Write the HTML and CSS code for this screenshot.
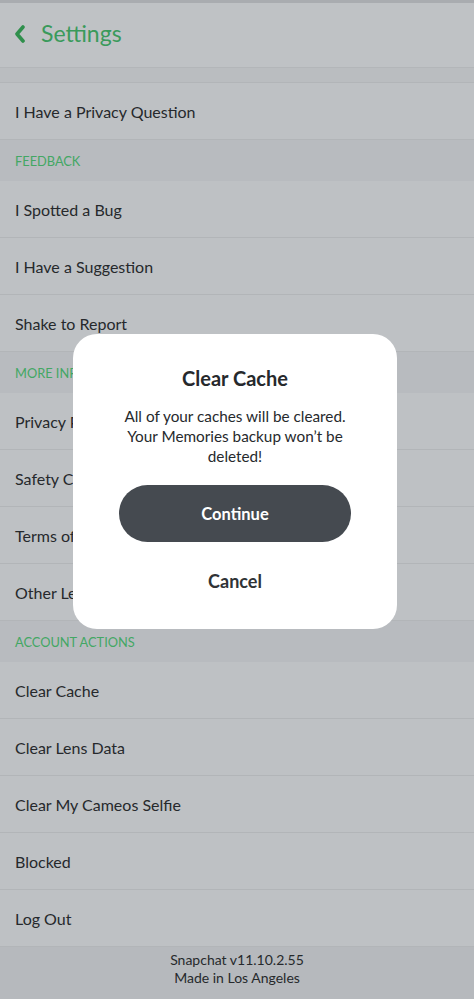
FILE: index.html
```html
<!DOCTYPE html>
<html lang="en">
<head>
    <meta charset="UTF-8">
    <meta name="viewport" content="width=device-width, initial-scale=1.0">
    <title>Settings</title>
    <link rel="stylesheet" href="styles.css">
</head>
<body>
    <div class="screen">
        <div class="header">
            <svg class="back" width="14" height="18" viewBox="0 0 14 18">
                <path d="M10 2 L4 9 L10 16" fill="none" stroke="#2f8f4c" stroke-width="3.6" stroke-linecap="round" stroke-linejoin="round"/>
            </svg>
            <span class="title">Settings</span>
        </div>
        <div class="spacer"></div>

        <div class="row">I Have a Privacy Question</div>
        <div class="section">FEEDBACK</div>
        <div class="row">I Spotted a Bug</div>
        <div class="row">I Have a Suggestion</div>
        <div class="row">Shake to Report</div>
        <div class="section">MORE INFORMATION</div>
        <div class="row">Privacy Policy</div>
        <div class="row">Safety Center</div>
        <div class="row">Terms of Service</div>
        <div class="row">Other Legal</div>
        <div class="section">ACCOUNT ACTIONS</div>
        <div class="row">Clear Cache</div>
        <div class="row">Clear Lens Data</div>
        <div class="row">Clear My Cameos Selfie</div>
        <div class="row">Blocked</div>
        <div class="row">Log Out</div>

        <div class="footer">
            <div>Snapchat v11.10.2.55</div>
            <div>Made in Los Angeles</div>
        </div>

        <div class="dialog">
            <h2>Clear Cache</h2>
            <p>All of your caches will be cleared. Your Memories backup won’t be deleted!</p>
            <button class="btn-continue">Continue</button>
            <button class="btn-cancel">Cancel</button>
        </div>
    </div>
</body>
</html>
```

FILE: styles.css
```css
body {
    margin: 0;
    font-family: 'Lato', 'Noto Sans', sans-serif;
    background-color: #b9bcc0;
    color: #26292c;
}
.screen {
    position: relative;
    width: 474px;
    height: 999px;
    overflow: hidden;
    background-color: #b9bcc0;
}
.header {
    height: 64px;
    border-top: 3px solid #a9acb0;
    display: flex;
    align-items: center;
    padding-left: 13px;
    background-color: #bfc2c5;
    border-bottom: 1px solid #b3b6b9;
}
.back {
    margin-right: 14px;
    margin-top: -3px;
}
.title {
    font-size: 23px;
    color: #3a9a5b;
    margin-top: -4px;
}
.spacer {
    height: 14px;
    background-color: #babdc0;
    border-bottom: 1px solid #b2b5b8;
}
.row {
    height: 56px;
    display: flex;
    align-items: center;
    padding-left: 15px;
    font-size: 16px;
    background-color: #bec1c4;
    border-bottom: 1px solid #b2b5b8;
}
.section {
    height: 41px;
    display: flex;
    align-items: center;
    padding-left: 15px;
    font-size: 12.8px;
    color: #43a764;
    background-color: #b8bbbf;
}
.footer {
    padding-top: 4px;
    text-align: center;
    font-size: 14px;
    line-height: 18px;
    background-color: #b6b9bd;
    height: 60px;
}
.dialog {
    position: absolute;
    left: 73px;
    top: 334px;
    width: 324px;
    height: 295px;
    box-sizing: border-box;
    background-color: #ffffff;
    border-radius: 24px;
    display: flex;
    flex-direction: column;
    align-items: center;
    padding-top: 31px;
}
.dialog h2 {
    margin: 0;
    font-size: 20px;
    font-weight: 700;
    color: #26292c;
    line-height: 26px;
}
.dialog p {
    margin: 15px 0 0;
    width: 250px;
    text-align: center;
    font-size: 15.3px;
    line-height: 20px;
    color: #26292c;
}
.btn-continue {
    margin-top: 19px;
    width: 232px;
    height: 57px;
    border: none;
    border-radius: 29px;
    background-color: #454a50;
    color: #ffffff;
    font-family: inherit;
    font-size: 16.5px;
    font-weight: 700;
}
.btn-cancel {
    margin-top: 27px;
    border: none;
    background: none;
    font-family: inherit;
    font-size: 18px;
    font-weight: 700;
    color: #303336;
}
```
